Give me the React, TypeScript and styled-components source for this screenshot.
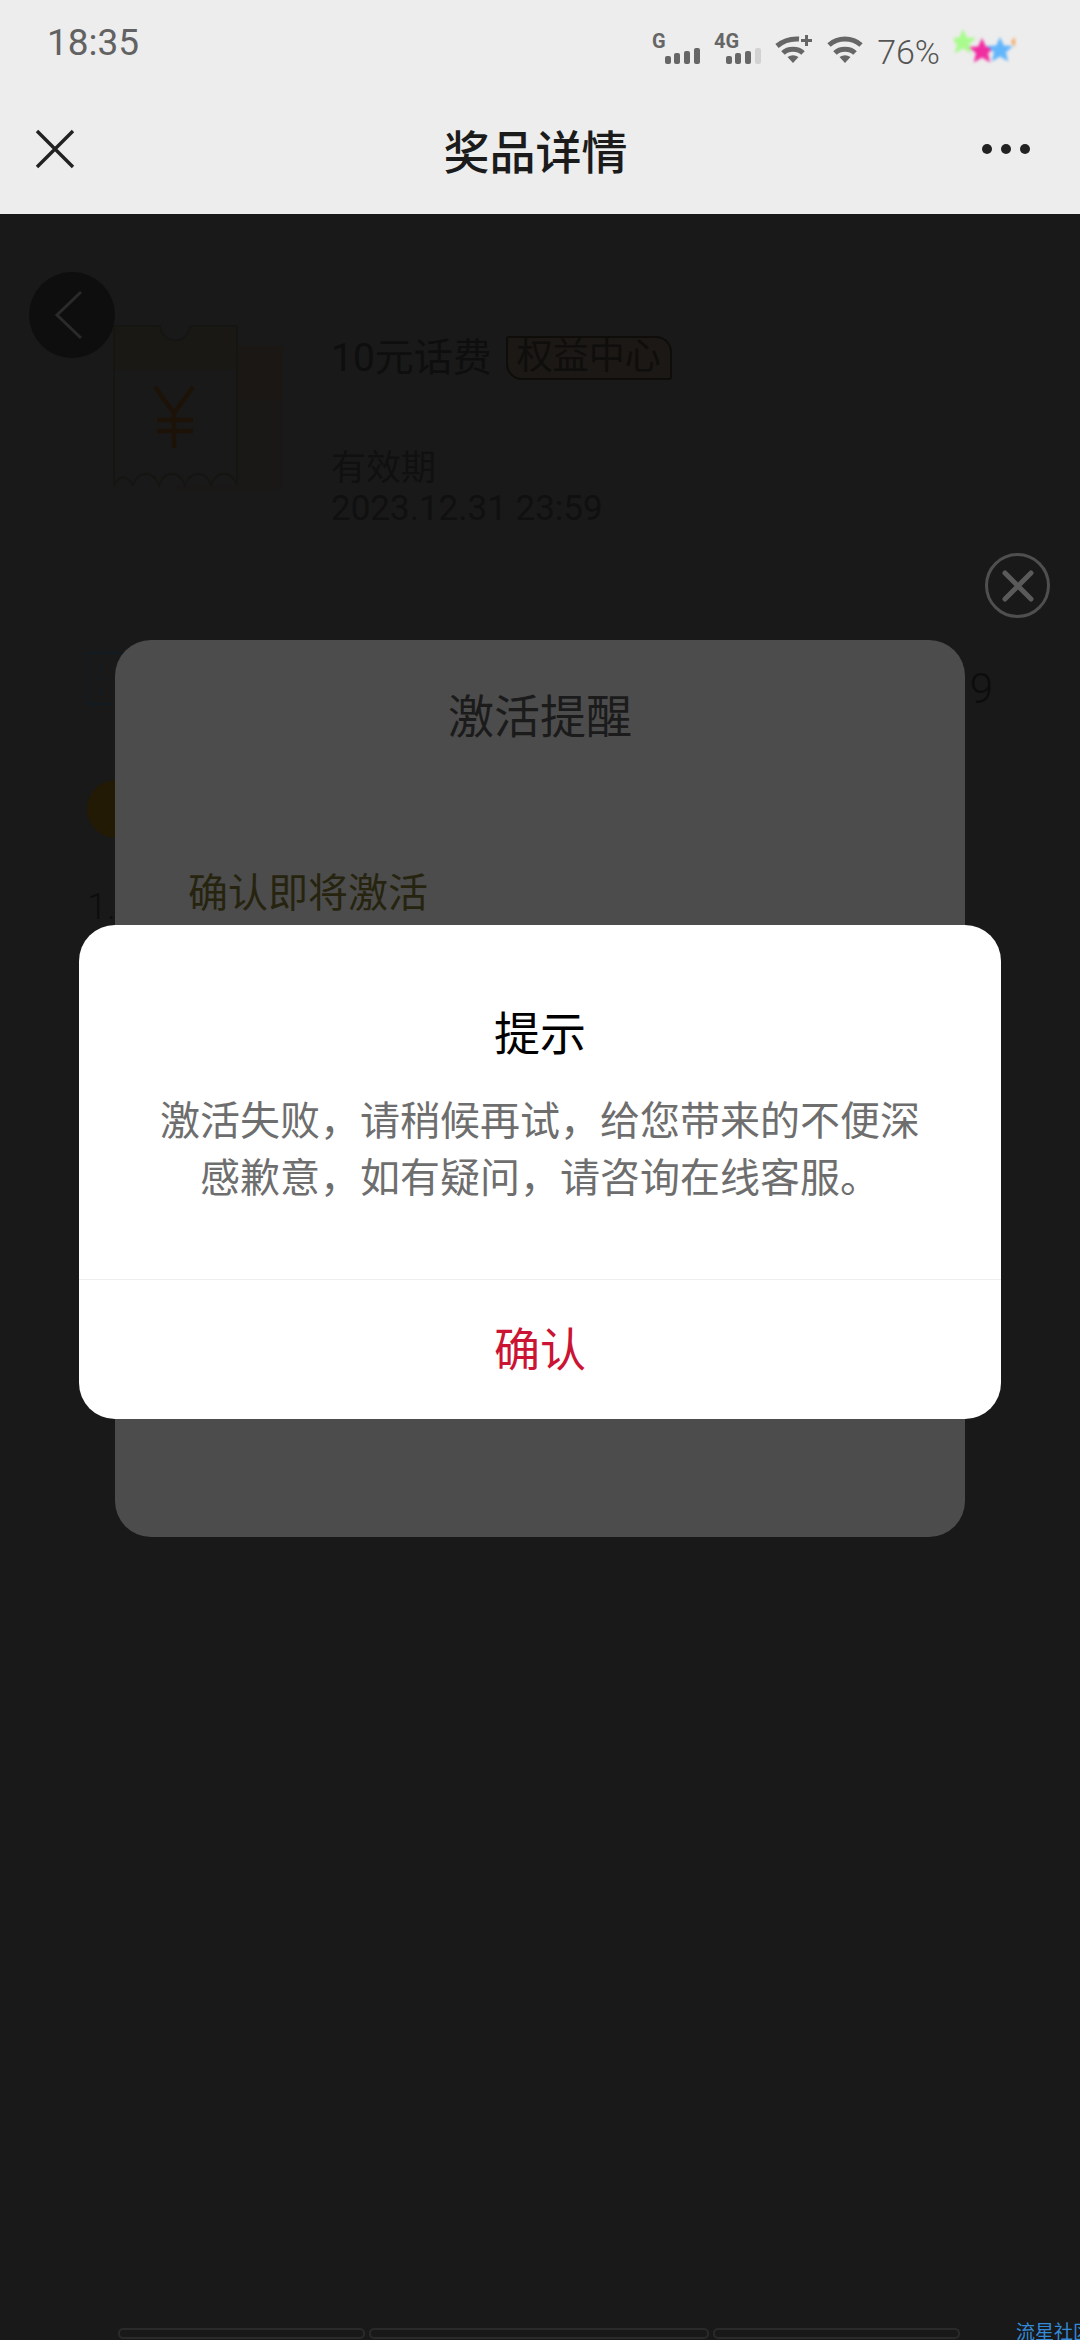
import React from 'react';
import styled, { createGlobalStyle } from 'styled-components';

const GlobalStyle = createGlobalStyle`
  html, body {
    margin: 0;
    padding: 0;
    background: #191919;
  }
  * {
    box-sizing: border-box;
  }
`;

const STAR = 'M0 -13 L3.800 -4.500 L13 -4 L6 2.200 L8.200 11.500 L0 6.500 L-8.200 11.500 L-6 2.200 L-13 -4 L-3.800 -4.500 Z';
const ALERT_MESSAGE =
  '激活失败\uFF0C请稍候再试\uFF0C给您带来的不便深感歉意\uFF0C如有疑问\uFF0C请咨询在线客服\u3002';

const SignalBars: React.FC<{ label: string; dimLast?: boolean; width: number }> = ({ label, dimLast, width }) => (
  <svg width={width} height="38" viewBox={`0 0 ${width} 38`}>
    <text x="0" y="22" fontFamily="Roboto, sans-serif" fontSize="20" fontWeight="700" fill="#666">
      {label}
    </text>
    <g transform={`translate(${width - 35} 6)`}>
      <rect x="0" y="24" width="6" height="8" rx="2" fill="#666" />
      <rect x="9" y="21" width="6" height="11" rx="2" fill="#666" />
      <rect x="19" y="19" width="6" height="13" rx="2" fill="#666" />
      <rect x="29" y="16" width="6" height="16" rx="2" fill={dimLast ? '#d2d2d2' : '#666'} />
    </g>
  </svg>
);

const WifiIcon: React.FC<{ plus?: boolean }> = ({ plus }) => (
  <svg width={plus ? 38 : 36} height="30" viewBox={`0 0 ${plus ? 38 : 36} 30`}>
    <g fill="none" stroke="#666" strokeWidth="5">
      <path d={plus ? 'M2 12 C9 6 17 4.500 24 5' : 'M2 11 C11 3 25 3 34 11'} />
      <path d="M8 19 C13 14 23 14 28 19" />
    </g>
    <path d="M18 29 L12.500 23 Q18 19.500 23.500 23 Z" fill="#666" />
    {plus && <path d="M31.500 1 V12 M26 6.500 H37" stroke="#666" strokeWidth="3" fill="none" />}
  </svg>
);

const StarBadge: React.FC = () => (
  <StarBox>
    <svg width="61" height="36" viewBox="0 0 61 36">
      <path d={STAR} transform="translate(9 14)" fill="#a9fb8e" />
      <path d={STAR} transform="translate(28 23)" fill="#f02ea0" />
      <path d={STAR} transform="translate(46 22)" fill="#62b6fb" />
      <path d="M61 9 L57 14 L61 19 Z" fill="#f5a35c" />
    </svg>
  </StarBox>
);

const Ticket: React.FC = () => (
  <svg width="172" height="180" viewBox="0 0 172 180">
    <g transform="translate(0 3)">
      <path d="M125 21 H170 V165 H62 V160 H125 Z" fill="#191817" />
      <path d="M125 21 H170 V75 H125 Z" fill="#1a1714" />
      <path d="M1 1 H47 C49 20 75 20 77 1 H124 V45 H1 Z" fill="#1a1815" />
      <path
        d="M1 1 H47 C49 20 75 20 77 1 H124 V160 C118 145 104 145 98 160 C92 145 78 145 72 160 C66 145 52 145 46 160 C40 145 26 145 20 160 C14 150 6 150 1 160 Z"
        fill="none"
        stroke="#151512"
        strokeWidth="2"
      />
      <path d="M42 62 L61 88 L80 62 M61 88 V123 M44 95 H80 M44 106 H80" fill="none" stroke="#1c1208" strokeWidth="4.500" />
    </g>
  </svg>
);

const CouponStub: React.FC = () => (
  <svg width="40" height="54" viewBox="0 0 40 54">
    <path d="M1 1 H40 M1 1 V52 H40 M14 6 V48" fill="none" stroke="#121a22" strokeWidth="2" />
    <path d="M14 6 V48" fill="none" stroke="#191919" strokeWidth="2" strokeDasharray="6 6" />
  </svg>
);

export default function App() {
  return (
    <>
      <GlobalStyle />
      <Page>
        <Header>
          <StatusBar>
            <Clock>18:35</Clock>
            <StatusIcons>
              <SignalBars label="G" width={48} />
              <SignalBars label="4G" dimLast width={47} />
              <WifiIcon plus />
              <WifiIcon />
              <Battery>76%</Battery>
              <StarBadge />
            </StatusIcons>
          </StatusBar>
          <NavBar>
            <svg width="40" height="40" viewBox="0 0 40 40">
              <path d="M2 2 L38 38 M38 2 L2 38" stroke="#222" strokeWidth="3.400" fill="none" />
            </svg>
            <NavTitle>奖品详情</NavTitle>
            <MoreDots>
              <Dot />
              <Dot />
              <Dot />
            </MoreDots>
          </NavBar>
        </Header>

        <Content>
          <BackButton>
            <svg width="30" height="50" viewBox="0 0 30 50">
              <path d="M27 2 L3 25 L27 48" stroke="#2a2a2a" strokeWidth="3" fill="none" />
            </svg>
          </BackButton>
          <PrizeRow>
            <Ticket />
            <PrizeInfo>
              <PrizeTitleRow>
                <PrizeName>10元话费</PrizeName>
                <Tag>权益中心</Tag>
              </PrizeTitleRow>
              <Validity>
                有效期
                <br />
                2023.12.31 23:59
              </Validity>
            </PrizeInfo>
          </PrizeRow>
          <CodeRow>
            <CouponStub />
            <TrailingDigit>9</TrailingDigit>
          </CodeRow>
          <GoldCoin />
          <NoteNumber>1.</NoteNumber>
        </Content>

        <TabStrip>
          <TabBar $width={247} />
          <TabBar $width={340} />
          <TabBar $width={247} />
        </TabStrip>
        <Watermark>流星社区</Watermark>

        <CloseButton>
          <svg width="34" height="34" viewBox="0 0 34 34">
            <path d="M4 4 L30 30 M30 4 L4 30" stroke="#5a5a5a" strokeWidth="5" strokeLinecap="round" fill="none" />
          </svg>
        </CloseButton>

        <ActivationDialog>
          <ActivationTitle>激活提醒</ActivationTitle>
          <ActivationText>确认即将激活</ActivationText>
        </ActivationDialog>

        <AlertDialog>
          <AlertBody>
            <AlertTitle>提示</AlertTitle>
            <AlertMessage>{ALERT_MESSAGE}</AlertMessage>
          </AlertBody>
          <AlertConfirm>确认</AlertConfirm>
        </AlertDialog>
      </Page>
    </>
  );
}

const Page = styled.div`
  position: relative;
  width: 1080px;
  height: 2340px;
  overflow: hidden;
  display: flex;
  flex-direction: column;
  background: #191919;
  font-family: Roboto, 'Noto Sans CJK SC', sans-serif;
`;

const Header = styled.header`
  height: 214px;
  flex-shrink: 0;
  background: #ededed;
`;

const StatusBar = styled.div`
  height: 84px;
  padding: 0 65px 0 47px;
  display: flex;
  align-items: center;
  justify-content: space-between;
`;

const Clock = styled.span`
  font-size: 37px;
  color: #626262;
`;

const StatusIcons = styled.div`
  display: flex;
  align-items: flex-end;
  gap: 14px;
  padding-top: 6px;
`;

const Battery = styled.span`
  margin-bottom: -4px;
  font-size: 34px;
  font-weight: 300;
  line-height: 32px;
  color: #555;
`;

const StarBox = styled.div`
  display: flex;
  margin-top: -4px;
  filter: blur(1.5px);
`;

const NavBar = styled.div`
  height: 130px;
  padding: 0 50px 0 35px;
  display: flex;
  align-items: center;
  justify-content: space-between;
`;

const NavTitle = styled.h1`
  margin: 0 0 0 14px;
  font-size: 46px;
  font-weight: 500;
  color: #1b1b1b;
`;

const MoreDots = styled.div`
  display: flex;
  gap: 9px;
`;

const Dot = styled.span`
  width: 10px;
  height: 10px;
  border-radius: 50%;
  background: #222;
`;

const Content = styled.main`
  flex: 1;
  color: #101010;
`;

const BackButton = styled.div`
  position: absolute;
  left: 29px;
  top: 272px;
  width: 86px;
  height: 86px;
  border-radius: 50%;
  background: #0e0e0e;
  display: flex;
  align-items: center;
  justify-content: center;
  padding-right: 6px;
`;

const PrizeRow = styled.section`
  display: flex;
  gap: 46px;
  padding: 108px 0 0 113px;
`;

const PrizeInfo = styled.div`
  display: flex;
  flex-direction: column;
  padding-top: 14px;
`;

const PrizeTitleRow = styled.div`
  display: flex;
  align-items: center;
  gap: 14px;
  height: 44px;
`;

const PrizeName = styled.span`
  font-size: 39px;
  line-height: 44px;
  color: #0e0e0e;
`;

const Tag = styled.span`
  width: 166px;
  height: 44px;
  border: 2px solid #0f0d0a;
  border-radius: 3px 16px 3px 16px;
  background: #1b1815;
  font-size: 36px;
  line-height: 38px;
  text-align: center;
  color: #0f0e0c;
`;

const Validity = styled.div`
  margin-top: 69px;
  font-size: 35px;
  line-height: 40px;
  color: #101010;
`;

const CodeRow = styled.section`
  display: flex;
  justify-content: space-between;
  align-items: center;
  height: 54px;
  margin-top: 123px;
  padding: 0 87px 0 87px;
`;

const TrailingDigit = styled.span`
  margin-top: 18px;
  font-size: 42px;
  font-weight: 300;
  color: #0c0c0c;
`;

const GoldCoin = styled.div`
  width: 58px;
  height: 58px;
  margin: 74px 0 0 87px;
  border-radius: 50%;
  background: #221a04;
`;

const NoteNumber = styled.div`
  margin: 51px 0 0 87px;
  font-size: 36px;
  line-height: 36px;
  font-weight: 300;
  color: #0d0d0d;
`;

const TabStrip = styled.div`
  position: absolute;
  left: 118px;
  bottom: 1px;
  display: flex;
  gap: 4px;
`;

const TabBar = styled.div<{ $width: number }>`
  width: ${({ $width }) => $width}px;
  height: 11px;
  border: 2px solid #2a2a2a;
  border-radius: 5px;
`;

const Watermark = styled.div`
  position: absolute;
  left: 1016px;
  top: 2321px;
  font-size: 19px;
  line-height: 24px;
  white-space: nowrap;
  color: #348ad6;
`;

const CloseButton = styled.div`
  position: absolute;
  left: 985px;
  top: 553px;
  width: 65px;
  height: 65px;
  border: 3px solid #4f4f4f;
  border-radius: 50%;
  display: flex;
  align-items: center;
  justify-content: center;
`;

const ActivationDialog = styled.section`
  position: absolute;
  left: 115px;
  top: 640px;
  width: 850px;
  height: 897px;
  border-radius: 36px;
  background: #4c4c4c;
  padding: 44px 73px 0;
`;

const ActivationTitle = styled.h2`
  margin: 0;
  height: 66px;
  font-size: 46px;
  font-weight: 400;
  line-height: 66px;
  text-align: center;
  color: #1b1b1b;
`;

const ActivationText = styled.p`
  margin: 115px 0 0;
  font-size: 40px;
  line-height: 58px;
  color: #26240f;
`;

const AlertDialog = styled.section`
  position: absolute;
  left: 79px;
  top: 925px;
  width: 922px;
  height: 494px;
  border-radius: 36px;
  background: #fff;
  display: flex;
  flex-direction: column;
`;

const AlertBody = styled.div`
  height: 355px;
  padding: 76px 76px 0;
  border-bottom: 1px solid #eeeeee;
  text-align: center;
`;

const AlertTitle = styled.h3`
  margin: 0;
  font-size: 46px;
  font-weight: 400;
  line-height: 66px;
  color: #000;
`;

const AlertMessage = styled.p`
  margin: 26px 0 0;
  font-size: 40px;
  line-height: 57px;
  color: #6e6e6e;
`;

const AlertConfirm = styled.div`
  flex: 1;
  display: flex;
  align-items: center;
  justify-content: center;
  padding-bottom: 7px;
  font-size: 46px;
  color: #cb1433;
`;
